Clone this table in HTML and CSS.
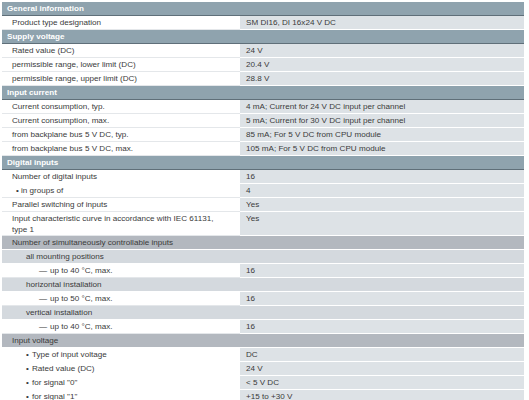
FILE: index.html
```html
<!DOCTYPE html>
<html lang="en">
<head>
<meta charset="utf-8">
<title>Technical specifications</title>
<link rel="stylesheet" href="styles.css">
</head>
<body>
<table class="spec">
  <colgroup><col class="c-label"><col class="c-value"></colgroup>
  <tbody>
    <tr class="head"><td colspan="2">General information</td></tr>
    <tr><td class="lbl">Product type designation</td><td class="val">SM DI16, DI 16x24 V DC</td></tr>

    <tr class="head"><td colspan="2">Supply voltage</td></tr>
    <tr><td class="lbl">Rated value (DC)</td><td class="val">24 V</td></tr>
    <tr><td class="lbl">permissible range, lower limit (DC)</td><td class="val">20.4 V</td></tr>
    <tr><td class="lbl">permissible range, upper limit (DC)</td><td class="val">28.8 V</td></tr>

    <tr class="head"><td colspan="2">Input current</td></tr>
    <tr><td class="lbl">Current consumption, typ.</td><td class="val">4 mA; Current for 24 V DC input per channel</td></tr>
    <tr><td class="lbl">Current consumption, max.</td><td class="val">5 mA; Current for 30 V DC input per channel</td></tr>
    <tr><td class="lbl">from backplane bus 5 V DC, typ.</td><td class="val">85 mA; For 5 V DC from CPU module</td></tr>
    <tr><td class="lbl">from backplane bus 5 V DC, max.</td><td class="val">105 mA; For 5 V DC from CPU module</td></tr>

    <tr class="head"><td colspan="2">Digital inputs</td></tr>
    <tr class="grp"><td class="lbl">Number of digital inputs</td><td class="val">16</td></tr>
    <tr><td class="lbl bul1"><span class="dot">•</span>in groups of</td><td class="val">4</td></tr>
    <tr><td class="lbl">Parallel switching of inputs</td><td class="val">Yes</td></tr>
    <tr><td class="lbl wrap">Input characteristic curve in accordance with IEC 61131, type 1</td><td class="val">Yes</td></tr>

    <tr class="sub1"><td colspan="2">Number of simultaneously controllable inputs</td></tr>
    <tr class="sub2"><td colspan="2">all mounting positions</td></tr>
    <tr><td class="lbl dash"><span class="em">—</span>up to 40 °C, max.</td><td class="val">16</td></tr>
    <tr class="sub2"><td colspan="2">horizontal installation</td></tr>
    <tr><td class="lbl dash"><span class="em">—</span>up to 50 °C, max.</td><td class="val">16</td></tr>
    <tr class="sub2"><td colspan="2">vertical installation</td></tr>
    <tr><td class="lbl dash"><span class="em">—</span>up to 40 °C, max.</td><td class="val">16</td></tr>

    <tr class="sub1"><td colspan="2">Input voltage</td></tr>
    <tr class="grp"><td class="lbl bul2"><span class="dot">•</span>Type of input voltage</td><td class="val">DC</td></tr>
    <tr class="grp"><td class="lbl bul2"><span class="dot">•</span>Rated value (DC)</td><td class="val">24 V</td></tr>
    <tr class="grp"><td class="lbl bul2"><span class="dot">•</span>for signal "0"</td><td class="val">&lt; 5 V DC</td></tr>
    <tr class="grp"><td class="lbl bul2"><span class="dot">•</span>for signal "1"</td><td class="val">+15 to +30 V</td></tr>
  </tbody>
</table>
</body>
</html>
```

FILE: styles.css
```css
html, body {
  margin: 0;
  padding: 0;
  background: #ffffff;
}

body {
  padding: 2px 0 0 2px;
  font-family: "Liberation Sans", Arial, sans-serif;
  font-size: 8.1px;
  color: #3a3a3a;
}

.spec {
  border-collapse: collapse;
  table-layout: fixed;
  width: 522px;
}

.c-label { width: 238px; }
.c-value { width: 284px; }

.spec td {
  padding: 1px 6px 0 10px;
  line-height: 12px;
  vertical-align: top;
  white-space: nowrap;
}

.spec td.wrap {
  white-space: normal;
  line-height: 11px;
  padding-right: 14px;
}

.head td {
  background: #8fa3ae;
  color: #ffffff;
  font-weight: bold;
  padding-left: 5px;
  border-bottom: 1px solid #5f6f79;
}

.lbl {
  background: #ffffff;
  border-bottom: 1px solid #e4e7ea;
}

.spec td.val {
  background: #dde2e6;
  border-bottom: 1px solid #ffffff;
  padding-left: 6px;
}

.grp .lbl {
  border-bottom-color: #ffffff;
}

.grp .val {
  border-bottom-color: #dde2e6;
}

.sub1 td {
  background: #b3b8bf;
  border-bottom: 1px solid #ffffff;
}

.spec .sub2 td {
  background: #d4d9de;
  padding-left: 24px;
  border-bottom: 1px solid #ffffff;
}

.spec td.bul1 { padding-left: 14px; }
.spec td.bul2 { padding-left: 24px; }
.spec td.dash { padding-left: 37px; }

.dot {
  display: inline-block;
  width: 5px;
}

.bul2 .dot { width: 6px; }

.em {
  display: inline-block;
  width: 11px;
}
```
